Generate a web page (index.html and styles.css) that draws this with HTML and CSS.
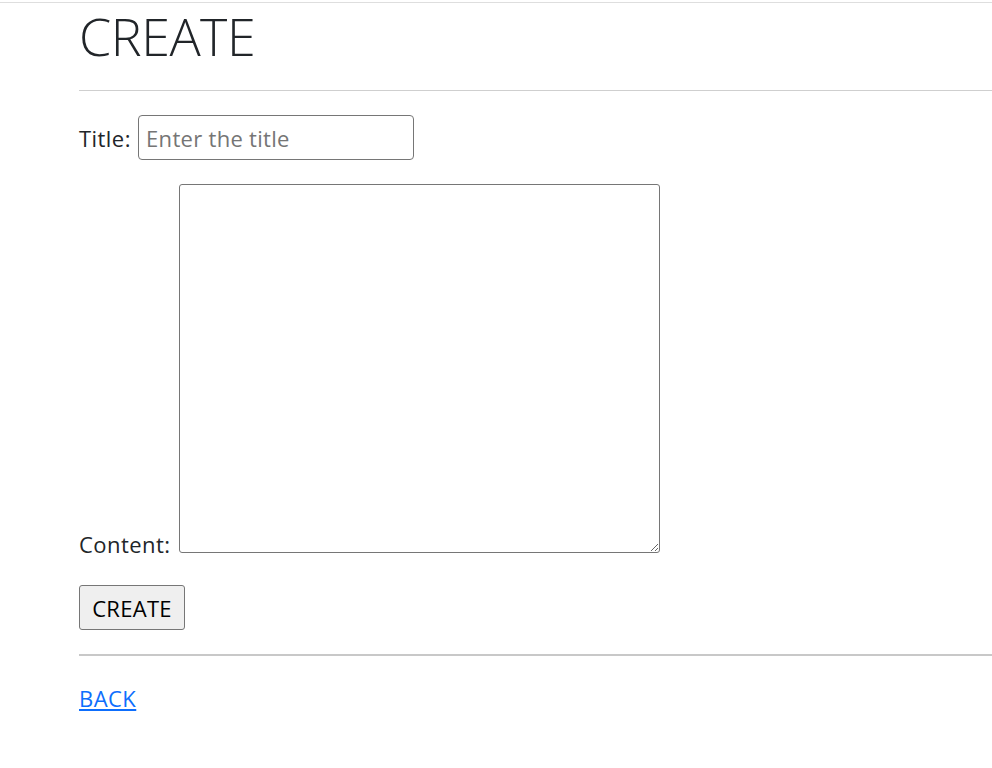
FILE: index.html
```html
<!DOCTYPE html>
<html lang="ko">
<head>
<meta charset="utf-8">
<title>CREATE</title>
<link rel="stylesheet" href="styles.css">
</head>
<body>
<div class="topline"></div>
<main class="container">
  <h1 class="display">CREATE</h1>
  <hr class="rule">
  <form class="form" action="#">
    <div class="field">
      <label for="title">Title:</label>
      <input id="title" class="text-input" type="text" placeholder="Enter the title">
    </div>
    <div class="field field-content">
      <label for="content">Content:</label>
      <textarea id="content" class="text-area"></textarea>
    </div>
    <div class="actions">
      <button type="submit" class="btn">CREATE</button>
    </div>
  </form>
  <hr class="rule rule-bottom">
  <a class="back-link" href="#">BACK</a>
</main>
</body>
</html>
```

FILE: styles.css
```css
html, body {
  margin: 0;
  padding: 0;
  background: #fff;
}
body {
  font-family: "Open Sans", "Noto Sans CJK KR", sans-serif;
  font-size: 22px;
  letter-spacing: 0.45px;
  color: #212529;
  line-height: 1.5;
}
.topline {
  margin-top: 2px;
  border-top: 1px solid #dedede;
}
.container {
  padding-left: 79px;
}
.display {
  margin: 0;
  padding-top: 2px;
  font-size: 52px;
  font-weight: 300;
  line-height: 1.2;
  letter-spacing: -0.5px;
  color: #212529;
}
.rule {
  margin: 23px 0 0 0;
  border: 0;
  border-top: 1px solid #cfcfcf;
  height: 0;
}
.form {
  margin-top: 24px;
}
.field {
  line-height: 1.2;
}
.field label {
  color: #212529;
}
.text-input {
  box-sizing: border-box;
  width: 276px;
  height: 45px;
  padding: 0 7px;
  margin: 0 0 0 1px;
  font: inherit;
  letter-spacing: 0.3px;
  color: #212529;
  border: 1px solid #767676;
  border-radius: 4px;
  vertical-align: baseline;
}
.text-input::placeholder {
  color: #757575;
}
.field-content {
  margin-top: 24px;
}
.text-area {
  box-sizing: border-box;
  width: 481px;
  height: 369px;
  font: inherit;
  border: 1px solid #767676;
  border-radius: 3px;
  vertical-align: baseline;
  margin: 0 0 0 2px;
}
.actions {
  margin-top: 27px;
  line-height: 1;
}
.btn {
  box-sizing: border-box;
  height: 45px;
  width: 106px;
  padding: 2px 0 0;
  font: inherit;
  letter-spacing: 0.3px;
  color: #000;
  background: #efefef;
  border: 1px solid #767676;
  border-radius: 3px;
  vertical-align: top;
}
.rule-bottom {
  margin-top: 24px;
  border-top: 2px solid #c8c8c8;
}
.back-link {
  display: inline-block;
  margin-top: 26px;
  color: #0d6efd;
  text-decoration: underline;
}
```
